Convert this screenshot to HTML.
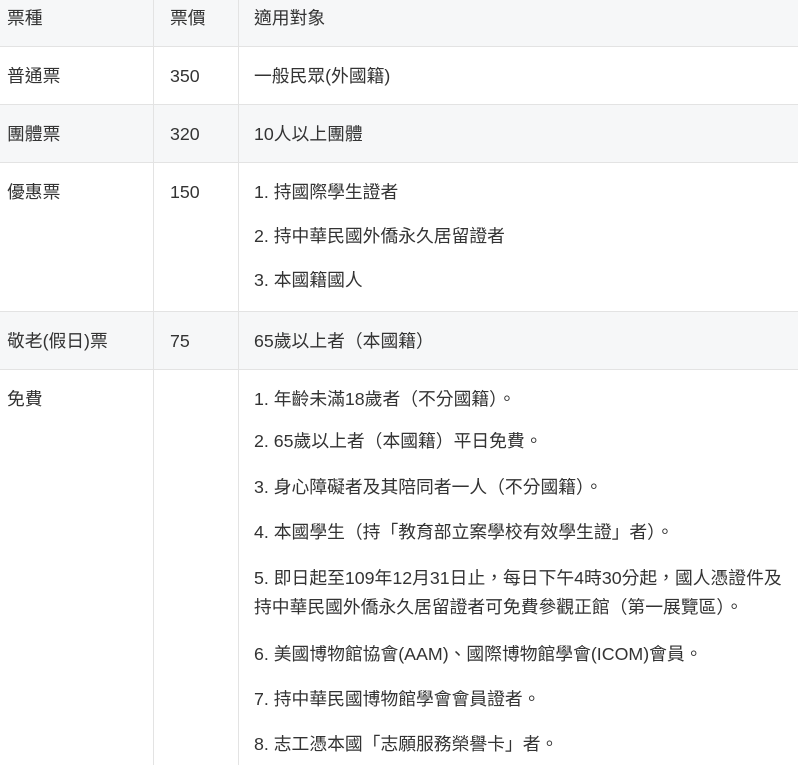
<!DOCTYPE html>
<html><head><meta charset="utf-8"><style>
body{margin:0;width:798px;height:765px;overflow:hidden;background:#fff;font-family:"Liberation Sans","Noto Sans CJK TC",sans-serif;font-size:17.8px;color:#333;position:relative}
.bg{position:absolute;left:0;width:798px;background:#f6f7f8}
.h{position:absolute;left:0;width:798px;height:1px;background:#e3e3e3}
.v{position:absolute;top:0;width:1px;height:765px;background:#e3e3e3}
.t{position:absolute;line-height:24px;white-space:nowrap}
</style></head><body>
<div class="bg" style="top:0;height:46px"></div>
<div class="bg" style="top:105px;height:57px"></div>
<div class="bg" style="top:312px;height:57px"></div>
<div class="h" style="top:46px"></div>
<div class="h" style="top:104px"></div>
<div class="h" style="top:162px"></div>
<div class="h" style="top:311px"></div>
<div class="h" style="top:369px"></div>
<div class="v" style="left:153px"></div>
<div class="v" style="left:238px"></div>

<div class="t" style="left:7px;top:6px">票種</div>
<div class="t" style="left:170px;top:6px">票價</div>
<div class="t" style="left:254px;top:6px">適用對象</div>

<div class="t" style="left:7px;top:64px">普通票</div>
<div class="t" style="left:170px;top:64px">350</div>
<div class="t" style="left:254px;top:64px">一般民眾(外國籍)</div>

<div class="t" style="left:7px;top:122px">團體票</div>
<div class="t" style="left:170px;top:122px">320</div>
<div class="t" style="left:254px;top:122px">10人以上團體</div>

<div class="t" style="left:7px;top:180px">優惠票</div>
<div class="t" style="left:170px;top:180px">150</div>
<div class="t" style="left:254px;top:180px">1. 持國際學生證者</div>
<div class="t" style="left:254px;top:224px">2. 持中華民國外僑永久居留證者</div>
<div class="t" style="left:254px;top:268px">3. 本國籍國人</div>

<div class="t" style="left:7px;top:329px">敬老(假日)票</div>
<div class="t" style="left:170px;top:329px">75</div>
<div class="t" style="left:254px;top:329px">65歲以上者（本國籍）</div>

<div class="t" style="left:7px;top:387px">免費</div>
<div class="t" style="left:254px;top:387px">1. 年齡未滿18歲者（不分國籍）。</div>
<div class="t" style="left:254px;top:429px">2. 65歲以上者（本國籍）平日免費。</div>
<div class="t" style="left:254px;top:475px">3. 身心障礙者及其陪同者一人（不分國籍）。</div>
<div class="t" style="left:254px;top:520px">4. 本國學生（持「教育部立案學校有效學生證」者）。</div>
<div class="t" style="left:254px;top:566px">5. 即日起至109年12月31日止，每日下午4時30分起，國人憑證件及</div>
<div class="t" style="left:254px;top:595px">持中華民國外僑永久居留證者可免費參觀正館（第一展覽區）。</div>
<div class="t" style="left:254px;top:642px">6. 美國博物館協會(AAM)、國際博物館學會(ICOM)會員。</div>
<div class="t" style="left:254px;top:687px">7. 持中華民國博物館學會會員證者。</div>
<div class="t" style="left:254px;top:732px">8. 志工憑本國「志願服務榮譽卡」者。</div>
</body></html>
